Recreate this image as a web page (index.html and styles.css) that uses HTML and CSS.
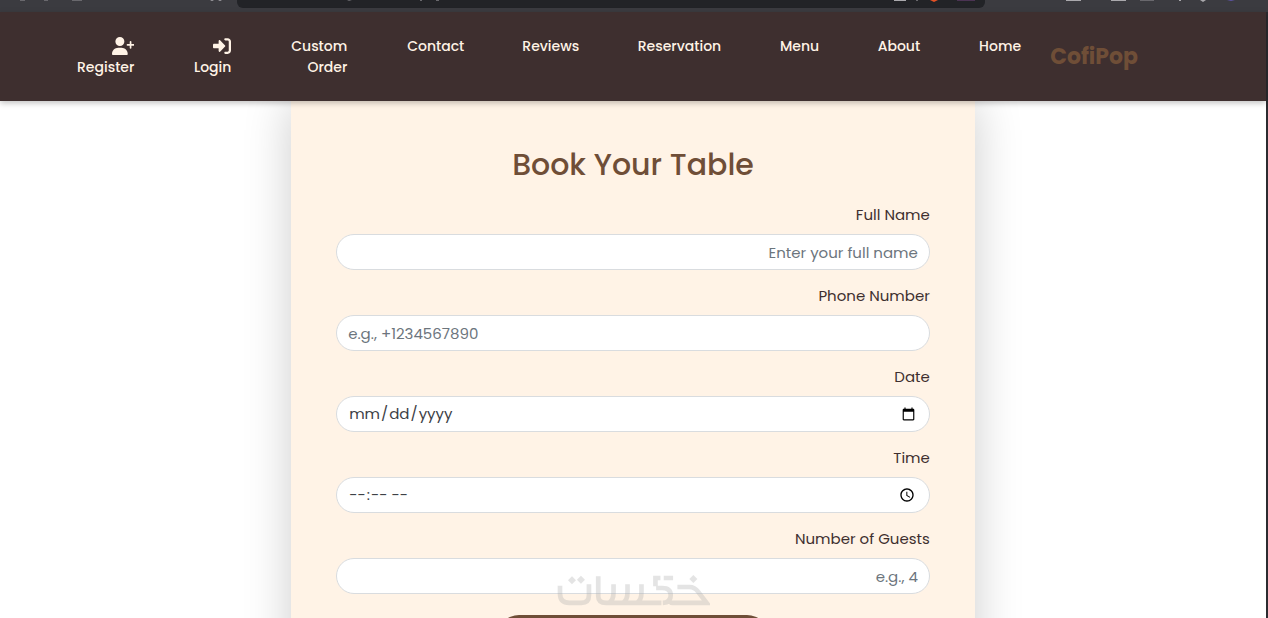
FILE: index.html
```html
<!DOCTYPE html>
<html lang="en">
<head>
<meta charset="utf-8">
<title>CofiPop - Reservation</title>
<link rel="stylesheet" href="styles.css">
</head>
<body>
<div class="chrome" aria-hidden="true">
  <div class="address"></div>
  <svg class="marks" viewBox="0 0 1268 4" preserveAspectRatio="none">
    <path fill="#aaa9ad" d="M210 0h4l-2 1zM218 0h4l-2 1zM894 0h12v1h-12zM1066 0h15v1h-15zM1111 0h15v1h-15zM1179 0h2v1h-2zM1200 0h6l-3 2z"/>
    <path fill="#69686d" d="M20 0h5v1h-5zM44 0h4v1h-4zM72 0h10v1H72zM347 0h5l-3 1zM420 0h2v1h-2zM436 0h3v1h-3zM916 0h2v1h-2zM1140 0h14v1h-14z"/>
    <path fill="#e45125" d="M930 0h8l-4 2z"/><path fill="#4b3353" d="M957 0h18v1h-18z"/><path fill="#5d54a4" d="M1227 0h8l-4 1z"/>
  </svg>
</div>
<div class="page">
  <nav class="navbar">
    <div class="links">
      <a class="link" href="#register"><svg class="icon" viewBox="0 0 640 512"><path fill="currentColor" d="M96 128a128 128 0 1 1 256 0A128 128 0 1 1 96 128zM0 482.300C0 383.800 79.800 304 178.300 304h91.400C368.200 304 448 383.800 448 482.300c0 16.400-13.300 29.700-29.700 29.700H29.700C13.300 512 0 498.700 0 482.300zM504 312V248H440c-13.300 0-24-10.700-24-24s10.700-24 24-24h64V136c0-13.300 10.700-24 24-24s24 10.700 24 24v64h64c13.300 0 24 10.700 24 24s-10.700 24-24 24H552v64c0 13.300-10.700 24-24 24s-24-10.700-24-24z"/></svg>Register</a>
      <a class="link" href="#login"><svg class="icon" viewBox="0 0 512 512"><path fill="currentColor" d="M352 96h64c17.700 0 32 14.300 32 32v256c0 17.700-14.300 32-32 32h-64c-17.700 0-32 14.300-32 32s14.300 32 32 32h64c53 0 96-43 96-96V128c0-53-43-96-96-96h-64c-17.700 0-32 14.300-32 32s14.300 32 32 32zM344 239L201 95c-15-15-41-4-41 17v80H32c-18 0-32 14-32 32v64c0 18 14 32 32 32h128v80c0 21 26 32 41 17l143-144c9-9 9-25 0-34z"/></svg>Login</a>
      <a class="link" href="#custom">Custom Order</a>
      <a class="link" href="#contact">Contact</a>
      <a class="link" href="#reviews">Reviews</a>
      <a class="link" href="#reservation">Reservation</a>
      <a class="link" href="#menu">Menu</a>
      <a class="link" href="#about">About</a>
      <a class="link" href="#home">Home</a>
    </div>
    <a class="brand" href="#home">CofiPop</a>
  </nav>
  <main class="content">
    <form class="card">
      <h1 class="title">Book Your Table</h1>
      <div class="field">
        <label for="name">Full Name</label>
        <input class="control end" id="name" type="text" placeholder="Enter your full name">
      </div>
      <div class="field">
        <label for="phone">Phone Number</label>
        <input class="control" id="phone" type="tel" placeholder="e.g., +1234567890">
      </div>
      <div class="field">
        <label for="date">Date</label>
        <input class="control" id="date" type="date">
      </div>
      <div class="field">
        <label for="time">Time</label>
        <input class="control" id="time" type="time">
      </div>
      <div class="field">
        <label for="guests">Number of Guests</label>
        <input class="control end" id="guests" type="number" placeholder="e.g., 4">
      </div>
      <button class="submit" type="submit" aria-label="Submit"></button>
    </form>
  </main>
</div>
<svg class="watermark" viewBox="52 44 460 92" role="img" aria-label="خمسات">
  <g fill="none" stroke="#a8a8a8" stroke-width="14">
    <path d="M61 76v24q0 28 28 28h36q23 0 23-23V72M176 48v60q0 20 24 20h166M222 72v24q0 24-14 32M264 72v24q0 24-14 32M306 72v24q0 24-14 32M348 78V53h15M373 53h28M350 83h18q26 0 26 22t-24 23M414 80h36q16 0 26 14l26 34H400q-6 0-10-6"/>
  </g>
  <path fill="#a8a8a8" d="m97 48 12 12-12 12-12-12zM124 46l12 12-12 12-12-12zM462 44l12 12-12 12-12-12z"/>
</svg>
</body>
</html>
```
FILE: styles.css
```css
* { box-sizing: border-box; }
body {
  margin: 0;
  height: 100vh;
  overflow: hidden;
  display: flex;
  flex-direction: column;
  background: #fff;
  color: #3e2f2f;
  font-family: Poppins, Inter, sans-serif;
}
.chrome {
  position: relative;
  height: 12px;
  flex: none;
  padding: 0 283px 0 237px;
  background: #3b3b40;
}
.address { height: 8px; border-radius: 0 0 6px 6px; background: #222327; }
.marks { position: absolute; inset: 0; width: 100%; height: 4px; }
.page {
  flex: 1;
  min-height: 0;
  display: flex;
  flex-direction: column;
  border-right: 2px solid #2b2b2f;
}
.navbar {
  position: relative;
  z-index: 1;
  flex: none;
  display: flex;
  gap: 29px;
  padding: 24px 128px 23px 77px;
  background: #3e2f2f;
  box-shadow: 0 2px 6px rgba(0, 0, 0, .25);
}
.links {
  flex: 1;
  display: grid;
  grid-template-columns: 57fr 39fr 58fr 59fr 57fr 84fr 40fr 43fr 43fr;
  column-gap: 58px;
}
.link {
  color: #fff3e6;
  font-size: 14px;
  font-weight: 500;
  line-height: 21px;
  text-align: right;
  text-decoration: none;
}
.icon { display: block; height: 18px; margin: 1px 0 2px auto; }
.brand {
  align-self: center;
  color: #6f4e37;
  font-size: 22px;
  font-weight: 700;
  line-height: 32px;
  text-decoration: none;
}
.content {
  flex: 1;
  min-height: 0;
  padding: 0 23%;
}
.card {
  display: flex;
  flex-direction: column;
  padding: 45px;
  background: #fff3e6;
  box-shadow: 0 0 45px rgba(0, 0, 0, .2);
}
.title {
  margin: 0 0 19px;
  color: #6f4e37;
  font-size: 30px;
  font-weight: 500;
  line-height: 38px;
  text-align: center;
}
.field { display: flex; flex-direction: column; gap: 8px; margin-bottom: 14px; }
.field label { font-size: 15px; line-height: 23px; text-align: right; }
.control {
  width: 100%;
  height: 36px;
  padding: 4px 11px;
  border: 1px solid #d9dcdf;
  border-radius: 18px;
  background: #fff;
  color: #3d4146;
  font: 15px/24px Poppins, Inter, sans-serif;
}
.control::placeholder { color: #6c757d; opacity: 1; }
.control[type="number"] { appearance: textfield; }
.control::-webkit-inner-spin-button { appearance: none; margin: 0; }
.end { text-align: right; }
.submit {
  align-self: center;
  width: 272px;
  height: 44px;
  margin-top: 7px;
  border: 0;
  border-radius: 22px;
  background: #6f4e37;
}
.watermark {
  position: absolute;
  z-index: 2;
  left: 557px;
  top: 575px;
  width: 153px;
  opacity: .3;
}
```
